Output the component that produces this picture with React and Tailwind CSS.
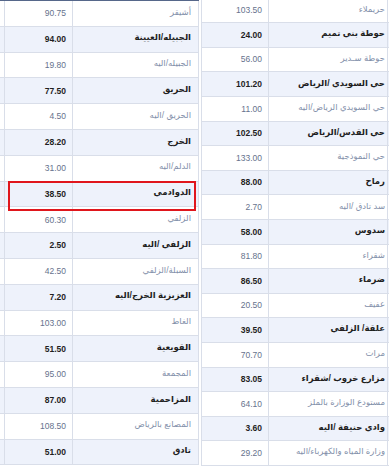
import React from "react";

const leftRows = [
  ["أشيقر", "90.75"],
  ["الجبيله/العيينة", "94.00"],
  ["الجبيله/اليه", "19.80"],
  ["الحريق", "77.50"],
  ["الحريق /اليه", "4.50"],
  ["الخرج", "28.20"],
  ["الدلم/اليه", "31.00"],
  ["الدوادمي", "38.50"],
  ["الزلفي", "60.30"],
  ["الزلفي /اليه", "2.50"],
  ["السبلة/الزلفي", "42.50"],
  ["العزيزية الخرج/اليه", "7.20"],
  ["الغاط", "103.00"],
  ["القويعية", "51.50"],
  ["المجمعة", "95.00"],
  ["المزاحمية", "87.00"],
  ["المصانع بالرياض", "108.50"],
  ["تادق", "51.00"],
];

const rightRows = [
  ["حريملاء", "103.50"],
  ["حوطة بني تميم", "24.00"],
  ["حوطة سـدير", "56.00"],
  ["حي السويدي /الرياض", "101.20"],
  ["حي السويدي الرياض/اليه", "11.00"],
  ["حي القدس/الرياض", "102.50"],
  ["حي النموذجية", "133.00"],
  ["رماح", "88.00"],
  ["سد تادق /اليه", "2.70"],
  ["سدوس", "58.00"],
  ["شقراء", "81.80"],
  ["ضرماء", "86.50"],
  ["عفيف", "20.50"],
  ["علقة/ الزلفي", "39.50"],
  ["مرات", "70.70"],
  ["مزارع خروب /شقراء", "83.05"],
  ["مستودع الوزارة بالملز", "64.10"],
  ["وادي حنيفة /اليه", "3.60"],
  ["وزارة المياه والكهرباء/اليه", "29.20"],
];

const LeftRow = ({ name, value, bold }) => (
  <div
    className={`flex h-[25.8px] border-b border-[#d9dee9] ${
      bold ? "bg-[#eef2fb] font-bold text-[#1f1f1f]" : "bg-white"
    }`}
  >
    <div className="w-[5px] border-r-[1.5px] border-[#d9dee9]" />
    <div
      className={`w-[68px] border-r border-[#d9dee9] flex items-center justify-end pr-[6px] ${
        bold ? "" : "text-[#66728d]"
      }`}
    >
      {value}
    </div>
    <div
      dir="rtl"
      className={`w-[126px] border-r border-[#d9dee9] flex items-center pr-[7px] pb-[3px] whitespace-nowrap overflow-hidden ${
        bold ? "" : "text-[#8390aa]"
      }`}
    >
      {name}
    </div>
  </div>
);

const RightRow = ({ name, value, bold }) => (
  <div
    className={`flex h-[24.6px] border-b border-[#d9dee9] ${
      bold ? "bg-[#eef2fb] font-bold text-[#1f1f1f]" : "bg-white"
    }`}
  >
    <div
      className={`w-[68px] border-l border-r border-[#d9dee9] flex items-center justify-end pr-[6px] ${
        bold ? "" : "text-[#66728d]"
      }`}
    >
      {value}
    </div>
    <div
      dir="rtl"
      className={`w-[119px] border-r border-[#d9dee9] flex items-center pr-[2px] pb-[3px] whitespace-nowrap overflow-hidden ${
        bold ? "" : "text-[#8390aa]"
      }`}
    >
      {name}
    </div>
  </div>
);

export default function App() {
  return (
    <div
      className="relative w-[392px] h-[466px] overflow-hidden bg-white text-[8.5px] leading-none flex"
      style={{ fontFamily: '"Liberation Sans", "DejaVu Sans", sans-serif' }}
    >
      <div className="w-[199px] border-t border-[#56678a] shrink-0">
        {leftRows.map(([name, value], i) => (
          <LeftRow key={name} name={name} value={value} bold={i % 2 === 1} />
        ))}
      </div>
      <div className="w-[2px] shrink-0" />
      <div className="w-[188px] shrink-0 mt-[-1.3px]">
        {rightRows.map(([name, value], i) => (
          <RightRow key={name} name={name} value={value} bold={i % 2 === 1} />
        ))}
      </div>
      <div className="absolute left-[8px] top-[181px] w-[188px] h-[30px] border-2 border-[#e0161c]" />
    </div>
  );
}
